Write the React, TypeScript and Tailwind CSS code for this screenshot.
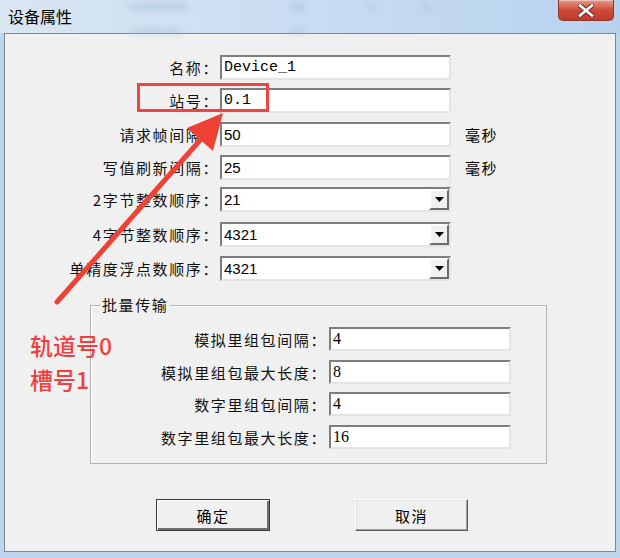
import React from "react";

const cjk = "font-['Noto_Sans_CJK_SC',sans-serif]";

function TextBox({
  value,
  className = "",
  valueClass = "",
}: {
  value: string;
  className?: string;
  valueClass?: string;
}) {
  return (
    <div
      className={`flex items-center border-2 border-t-[#7e7e7e] border-l-[#7e7e7e] border-r-[#e4e4e4] border-b-[#e4e4e4] bg-white pl-[2px] ${className}`}
    >
      <span className={`leading-none text-black ${valueClass}`}>{value}</span>
    </div>
  );
}

function Select({ value }: { value: string }) {
  return (
    <div className="flex h-[25px] w-[231px] items-center border-2 border-t-[#7e7e7e] border-l-[#7e7e7e] border-r-[#e4e4e4] border-b-[#e4e4e4] bg-white pl-[2px]">
      <span className="flex-1 font-['Liberation_Sans',sans-serif] text-[15px] leading-none text-black">
        {value}
      </span>
      <div className="flex h-[21px] w-[20px] items-center justify-center border-2 border-t-[#ffffff] border-l-[#ffffff] border-r-[#6b6b6b] border-b-[#6b6b6b] bg-[#f0f0f0]">
        <svg width="9" height="5" viewBox="0 0 9 5">
          <path d="M0 0 H9 L4.5 5 Z" fill="#000" />
        </svg>
      </div>
    </div>
  );
}

function Row({
  label,
  children,
  className = "",
}: {
  label: string;
  children: React.ReactNode;
  className?: string;
}) {
  return (
    <div className={`flex h-[25px] items-center ${className}`}>
      <div className="w-[214px] text-right text-[15px] leading-none tracking-[1.6px] text-[#111]">
        {label}
      </div>
      <div className="ml-[1px] flex items-center">{children}</div>
    </div>
  );
}

function GroupRow({
  label,
  value,
  className = "",
}: {
  label: string;
  value: string;
  className?: string;
}) {
  return (
    <div className={`flex h-[24px] items-center ${className}`}>
      <div className="w-[236px] text-right text-[15px] leading-none tracking-[1.6px] text-[#111]">
        {label}
      </div>
      <TextBox
        value={value}
        className="ml-[2px] h-[24px] w-[182px]"
        valueClass="font-['Liberation_Serif',serif] text-[16px]"
      />
    </div>
  );
}

export default function App() {
  return (
    <div
      className={`relative flex h-[558px] w-[620px] flex-col overflow-hidden bg-[#bcd4ec] ${cjk}`}
    >
      {/* title bar */}
      <div className="relative flex h-[33px] items-start bg-gradient-to-r from-[#d9e6f3] via-[#c9ddf2] to-[#b8d2ee]">
        <span className="absolute left-[128px] top-[3px] h-[8px] w-[60px] rounded bg-[#9fb6cf] opacity-40 blur-[3px]" />
        <span className="absolute left-[128px] top-[28px] h-[6px] w-[54px] rounded bg-[#9fb6cf] opacity-40 blur-[3px]" />
        <span className="absolute left-[290px] top-[3px] h-[8px] w-[16px] rounded bg-[#9fb6cf] opacity-40 blur-[3px]" />
        <span className="absolute left-[290px] top-[28px] h-[6px] w-[16px] rounded bg-[#9fb6cf] opacity-40 blur-[3px]" />
        <span className="absolute left-[368px] top-[3px] h-[8px] w-[8px] rounded bg-[#9fb6cf] opacity-40 blur-[3px]" />
        <span className="absolute left-[422px] top-[3px] h-[8px] w-[8px] rounded bg-[#9fb6cf] opacity-40 blur-[3px]" />
        <span className="relative ml-[8px] mt-[8px] text-[16px] leading-none text-black">
          设备属性
        </span>
        <div className="relative ml-auto mr-[6px] flex h-[21px] w-[56px] items-center justify-center rounded-b-[5px] border border-t-0 border-[#8a352c] bg-gradient-to-b from-[#e39a8b] via-[#cf4a38] to-[#c0392b] shadow-[inset_0_1px_0_rgba(255,255,255,0.4)]">
          <svg width="16" height="13" viewBox="0 0 16 13">
            <path
              d="M2 1.5 L14 11.5 M14 1.5 L2 11.5"
              stroke="#5a2a24"
              strokeWidth="4.5"
              strokeLinecap="square"
            />
            <path
              d="M2 1.5 L14 11.5 M14 1.5 L2 11.5"
              stroke="#ffffff"
              strokeWidth="2.6"
              strokeLinecap="square"
            />
          </svg>
        </div>
      </div>

      {/* client area */}
      <div className="mx-[4px] mb-[6px] flex flex-1 flex-col border border-[#7b8797] bg-[#f0f0f0] pt-[21px]">
        <Row label="名称：">
          <TextBox
            value="Device_1"
            className="h-[25px] w-[231px]"
            valueClass="font-['Liberation_Mono',monospace] text-[15px]"
          />
        </Row>
        <Row label="站号：" className="mt-[8px]">
          <TextBox
            value="0.1"
            className="h-[25px] w-[231px]"
            valueClass="font-['Liberation_Mono',monospace] text-[15px]"
          />
        </Row>
        <Row label="请求帧间隔：" className="mt-[9px]">
          <TextBox
            value="50"
            className="h-[25px] w-[231px]"
            valueClass="font-['Liberation_Sans',sans-serif] text-[15px]"
          />
          <span className="ml-[14px] text-[15px] leading-none tracking-[1.6px]">毫秒</span>
        </Row>
        <Row label="写值刷新间隔：" className="mt-[8px]">
          <TextBox
            value="25"
            className="h-[25px] w-[231px]"
            valueClass="font-['Liberation_Sans',sans-serif] text-[15px]"
          />
          <span className="ml-[14px] text-[15px] leading-none tracking-[1.6px]">毫秒</span>
        </Row>
        <Row label="2字节整数顺序：" className="mt-[7px]">
          <Select value="21" />
        </Row>
        <Row label="4字节整数顺序：" className="mt-[10px]">
          <Select value="4321" />
        </Row>
        <Row label="单精度浮点数顺序：" className="mt-[9px]">
          <Select value="4321" />
        </Row>

        {/* group box */}
        <div className="relative ml-[85px] mt-[24px] flex w-[457px] flex-col border border-[#b4b4b4] pb-[14px] pt-[21px] shadow-[inset_1px_1px_0_#ffffff]">
          <span className="absolute -top-[9px] left-[9px] bg-[#f0f0f0] px-[2px] text-[15px] leading-none tracking-[1.6px] text-[#111]">
            批量传输
          </span>
          <GroupRow label="模拟里组包间隔：" value="4" />
          <GroupRow label="模拟里组包最大长度：" value="8" className="mt-[9px]" />
          <GroupRow label="数字里组包间隔：" value="4" className="mt-[8px]" />
          <GroupRow label="数字里组包最大长度：" value="16" className="mt-[9px]" />
        </div>

        {/* buttons */}
        <div className="ml-[151px] mt-[35px] flex gap-[85px]">
          <button className="flex h-[32px] w-[114px] items-center justify-center border border-[#3c3c3c] bg-[#f0f0f0] shadow-[inset_1px_1px_0_#ffffff,inset_-2px_-2px_0_#6e6e6e] text-[15px] leading-none tracking-[1.6px] text-black">
            确定
          </button>
          <button className="flex h-[32px] w-[113px] items-center justify-center border border-t-[#ffffff] border-l-[#ffffff] border-r-[#5f5f5f] border-b-[#5f5f5f] bg-[#f0f0f0] shadow-[inset_-1px_-1px_0_#a0a0a0,inset_1px_1px_0_#e3e3e3] text-[15px] leading-none tracking-[1.6px] text-black">
            取消
          </button>
        </div>
      </div>

      {/* annotations drawn over the dialog */}
      <div className="pointer-events-none absolute left-[137px] top-[83px] h-[29px] w-[132px] border-[3px] border-[#ef4444]" />
      <svg
        className="pointer-events-none absolute left-0 top-0"
        width="620"
        height="558"
        viewBox="0 0 620 558"
      >
        <line x1="57" y1="302" x2="202" y2="138" stroke="#ef4136" strokeWidth="5" strokeLinecap="round" />
        <path d="M223 113 L213 151 L187 128 Z" fill="#ef4136" />
      </svg>
      <div className="pointer-events-none absolute left-[30px] top-[328px] flex flex-col text-[23px] font-medium leading-[34px] text-[#ee4040]">
        <span>轨道号0</span>
        <span>槽号1</span>
      </div>
    </div>
  );
}
